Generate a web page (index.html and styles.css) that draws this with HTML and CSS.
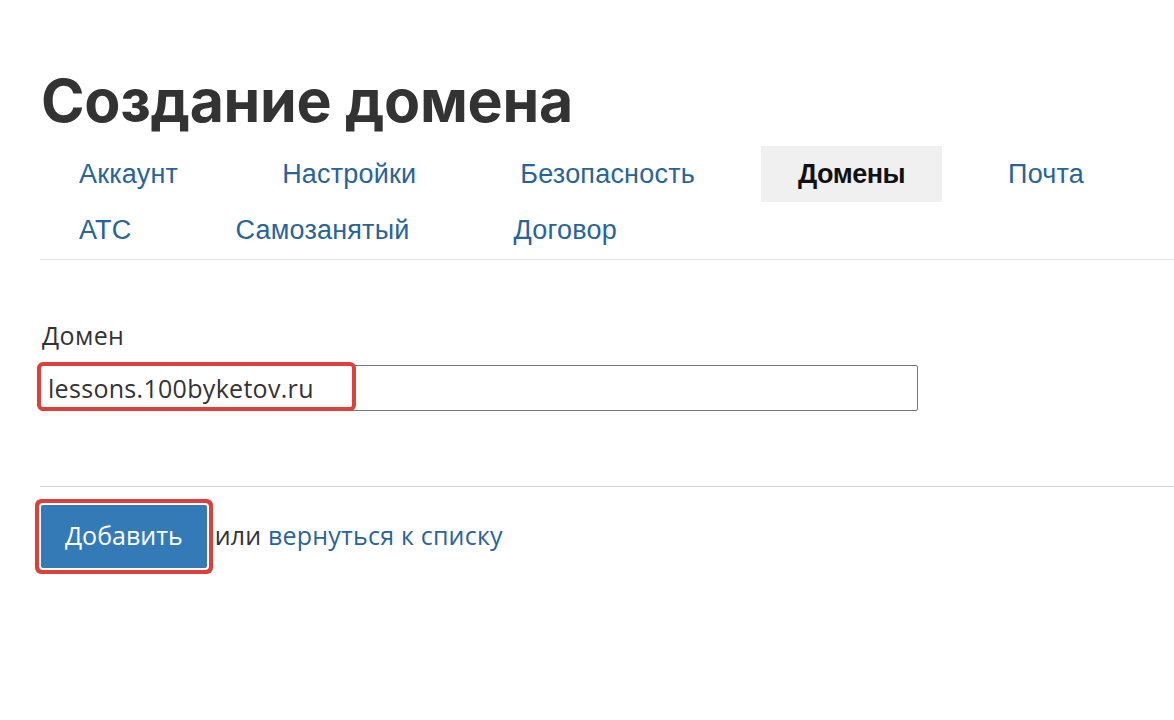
FILE: index.html
```html
<!DOCTYPE html>
<html>
<head>
  <title>Создание домена</title>
  <link rel="stylesheet" href="styles.css">
</head>
<body>
  <div class="page">
    <h1>Создание домена</h1>

    <ul class="tabs">
      <li><a href="#">Аккаунт</a></li>
      <li><a href="#">Настройки</a></li>
      <li><a href="#">Безопасность</a></li>
      <li class="active"><a href="#">Домены</a></li>
      <li><a href="#">Почта</a></li>
      <li><a href="#">АТС</a></li>
      <li><a href="#">Самозанятый</a></li>
      <li><a href="#">Договор</a></li>
    </ul>

    <form class="domain-form">
      <div class="field">
        <label for="domain">Домен</label>
        <div class="input-wrap">
          <input type="text" id="domain" value="lessons.100byketov.ru">
          <span class="mark mark-input"></span>
        </div>
      </div>

      <div class="actions">
        <button type="submit" class="btn-primary">Добавить</button>
        <span class="or">или <a href="#">вернуться к списку</a></span>
      </div>
    </form>
  </div>
</body>
</html>
```

FILE: styles.css
```css
:root {
  --text: #333333;
  --link: #2a6496;
  --primary: #337ab7;
  --mark: #d9413a;
  --line: #e5e5e5;
}

body {
  margin: 0;
  background: white;
  color: var(--text);
  font-family: "Open Sans", "Noto Sans", sans-serif;
}

.page {
  padding: 56px 0 120px 40px;
}

h1 {
  margin: 0 0 0 1px;
  font-family: Inter, "Noto Sans", sans-serif;
  font-size: 59px;
  line-height: 90px;
  font-weight: 700;
  letter-spacing: -0.3px;
  color: #333;
}

/* Tabs */
.tabs {
  display: flex;
  flex-wrap: wrap;
  column-gap: 28px;
  margin: 0;
  padding: 0 0 0 1px;
  list-style: none;
  border-bottom: 1px solid var(--line);
}

.tabs li a {
  display: block;
  height: 56px;
  padding: 0 38px;
  line-height: 56px;
  font-family: "Liberation Sans", Arial, sans-serif;
  font-size: 27px;
  letter-spacing: 0.2px;
  color: var(--link);
  text-decoration: none;
}

.tabs li:nth-child(n+6) a {
  height: 57px;
  line-height: 57px;
}

.tabs li.active a {
  padding: 0 37px;
  background: #f0f0f0;
  color: #111;
  font-weight: 700;
  letter-spacing: -0.5px;
}

/* Form */
.domain-form {
  padding-top: 59px;
}

.field label {
  display: block;
  margin-left: 2px;
  font-size: 25px;
  line-height: 32px;
  letter-spacing: 0.4px;
  color: var(--text);
}

.input-wrap {
  position: relative;
  width: 878px;
  margin-top: 14px;
}

.input-wrap input {
  width: 100%;
  height: 46px;
  box-sizing: border-box;
  padding: 0 7px;
  border: 1px solid #767676;
  border-radius: 2px;
  font-family: "Open Sans", "Noto Sans", sans-serif;
  font-size: 25px;
  color: var(--text);
  letter-spacing: 0.3px;
}

.mark-input {
  position: absolute;
  left: -3px;
  top: -3px;
  width: 319px;
  height: 49px;
  box-sizing: border-box;
  border: 4px solid var(--mark);
  border-radius: 6px;
  pointer-events: none;
}

.actions {
  display: flex;
  align-items: center;
  gap: 8px;
  margin-top: 75px;
  padding-top: 18px;
  border-top: 1px solid #d0d0d0;
}

.btn-primary {
  height: 63px;
  margin-left: 1px;
  padding: 0 24px 3px;
  border: none;
  border-radius: 2px;
  background: var(--primary);
  color: white;
  font-family: "Open Sans", "Noto Sans", sans-serif;
  font-size: 25px;
  box-shadow: 0 0 0 2px white, 0 0 0 6px var(--mark);
}

.or {
  margin-top: -4px;
  font-size: 25px;
  letter-spacing: 0.2px;
  color: var(--text);
}

.or a {
  color: var(--link);
  text-decoration: none;
}
```
